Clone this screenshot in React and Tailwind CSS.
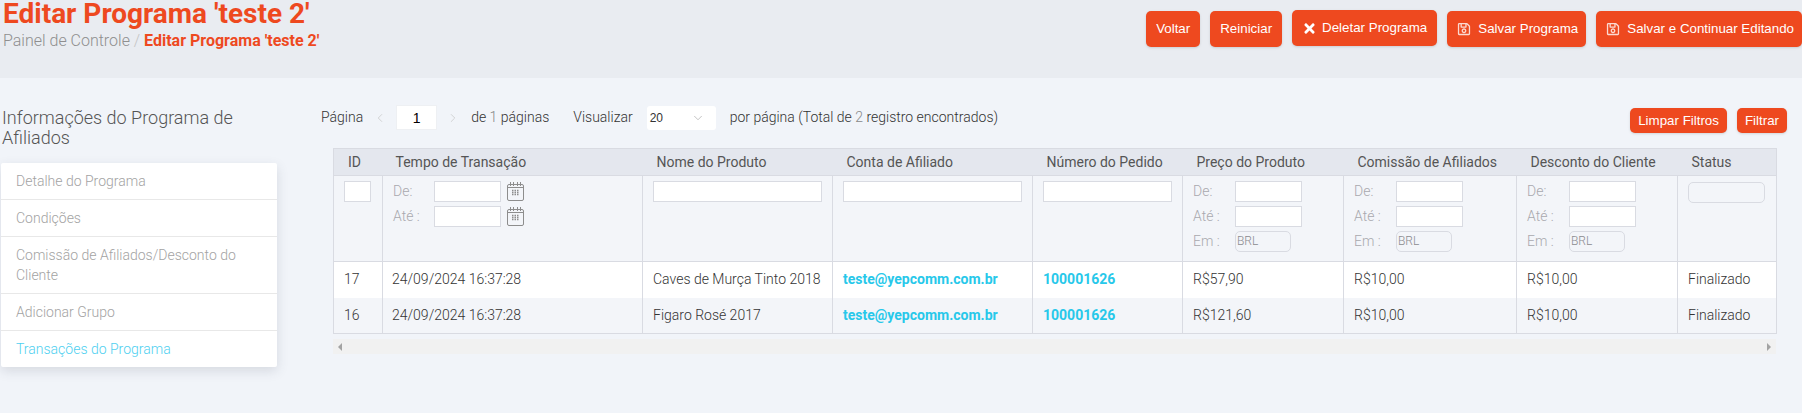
import { ChevronDown, ChevronLeft, ChevronRight } from 'lucide-react';
import { FaRegSave, FaTimes } from 'react-icons/fa';

const sideLinks = ['Detalhe do Programa', 'Condições', 'Comissão de Afiliados/Desconto do Cliente', 'Adicionar Grupo', 'Transações do Programa'];

const columns = [
  { label: 'ID', width: 49, pad: 'pl-[14px]' },
  { label: 'Tempo de Transação', width: 260, pad: 'pl-[13px]' },
  { label: 'Nome do Produto', width: 190, pad: 'pl-[14px]' },
  { label: 'Conta de Afiliado', width: 200, pad: 'pl-[14px]' },
  { label: 'Número do Pedido', width: 150, pad: 'pl-[14px]' },
  { label: 'Preço do Produto', width: 161, pad: 'pl-[14px]' },
  { label: 'Comissão de Afiliados', width: 173, pad: 'pl-[14px]' },
  { label: 'Desconto do Cliente', width: 161, pad: 'pl-[14px]' },
  { label: 'Status', width: 99, pad: 'pl-[14px]' },
];

const rows = [
  { id: 17, date: '24/09/2024 16:37:28', product: 'Caves de Murça Tinto 2018', price: 'R$57,90', bg: 'bg-white' },
  { id: 16, date: '24/09/2024 16:37:28', product: 'Figaro Rosé 2017', price: 'R$121,60', bg: 'bg-[#f3f5f9]' },
];

function Btn({ children, className = '' }) {
  return (
    <button className={`flex items-center rounded-[5px] bg-[#ee491f] text-white text-[13.33px] shadow-sm ${className}`} style={{ fontFamily: '"Liberation Sans", sans-serif' }}>
      {children}
    </button>
  );
}

function CalendarIcon() {
  return (
    <svg width="17" height="19" viewBox="0 0 17 19" fill="none" stroke="#8d8d8d" className="ml-[6px] shrink-0">
      <rect x="0.5" y="2.5" width="16" height="16" rx="1.5" />
      <path d="M0.5 5.5H16.5M3.5 0V4M6.5 0V4M10.5 0V4M13.5 0V4" />
      <path d="M5 8.5h7M5 10.5h7M5 12.5h7" strokeWidth="1.4" strokeDasharray="1.5 1" />
    </svg>
  );
}

function TextBox({ className = '' }) {
  return <div className={`h-[21px] bg-white border border-[#d9dbe2] ${className}`} />;
}

function RangeRow({ label, labelWidth = 'w-[42px]', children }) {
  return (
    <div className="flex items-center h-[21px] mb-[4px] text-[14px] text-[#a9a9ae] font-light">
      <span className={`${labelWidth} shrink-0`}>{label}</span>
      {children}
    </div>
  );
}

function MoneyFilter() {
  return (
    <div className="pl-[10px]">
      <RangeRow label="De:"><TextBox className="w-[67px]" /></RangeRow>
      <RangeRow label="Até :"><TextBox className="w-[67px]" /></RangeRow>
      <RangeRow label="Em :">
        <div className="w-[56px] h-[21px] border border-[#d9dbe2] rounded-[5px] pl-[1px] text-[12px] leading-[18px] text-[#8b8b8f]">BRL</div>
      </RangeRow>
    </div>
  );
}

export default function App() {
  return (
    <div className="min-h-screen bg-[#f1f4f9] text-[#444] overflow-hidden" style={{ fontFamily: 'Roboto, sans-serif' }}>
      <header className="h-[78px] bg-[#e9ecf1] flex justify-between">
        <div className="pl-[3px]">
          <h1 className="text-[28px] leading-[28px] font-bold text-[#ee491f]">Editar Programa 'teste 2'</h1>
          <p className="mt-[3px] text-[16px] leading-[20px] font-light text-[#8f8f8f]">
            Painel de Controle <span className="text-[#c4c4c4]">/</span> <span className="font-bold text-[#ee491f]">Editar Programa 'teste 2'</span>
          </p>
        </div>
        <div className="flex items-start gap-[10px] pt-[11px]">
          <Btn className="h-[36px] px-[10px]">Voltar</Btn>
          <Btn className="h-[36px] px-[10px]">Reiniciar</Btn>
          <Btn className="h-[36px] px-[10px] -mt-[1px]"><FaTimes className="mr-[5px] text-[15px]" />Deletar Programa</Btn>
          <Btn className="h-[36px] pl-[10px] pr-[8px]"><FaRegSave className="mr-[7px] text-[14px] opacity-80" />Salvar Programa</Btn>
          <Btn className="h-[36px] pl-[10px] pr-[8px]"><FaRegSave className="mr-[7px] text-[14px] opacity-80" />Salvar e Continuar Editando</Btn>
        </div>
      </header>

      <div className="flex pt-[27px]">
        <aside className="w-[276px] ml-[1px] pt-[3px] shrink-0">
          <h2 className="pl-[1px] text-[18px] leading-[20px] font-light text-[#555]">Informações do Programa de Afiliados</h2>
          <ul className="mt-[15px] bg-white rounded-[2px] shadow-[0_4px_12px_rgba(60,70,90,0.15)] text-[14px] leading-[20px] font-light text-[#a3a3a3]">
            {sideLinks.map((l, i) => (
              <li key={l} className={`px-[15px] py-[8px] ${i < 4 ? 'border-b border-[#e8e8e8]' : 'text-[#4fd0f0]'}`}>{l}</li>
            ))}
          </ul>
        </aside>

        <main className="ml-[44px] w-[1466px] shrink-0">
          <div className="flex items-start justify-between h-[25px] text-[14px] font-light text-[#333]">
            <div className="flex items-center h-[25px]">
              <span>Página</span>
              <ChevronLeft size={14} strokeWidth={1.25} className="ml-[10px] text-[#c6c6c6]" />
              <div className="ml-[9px] w-[41px] h-[25px] bg-white border border-[#eef0f3] text-center text-[14px] leading-[24px] text-black" style={{ fontFamily: '"Liberation Sans", sans-serif' }}>1</div>
              <ChevronRight size={14} strokeWidth={1.25} className="ml-[9px] text-[#c6c6c6]" />
              <span className="ml-[11px]">de <span className="text-[#888]">1</span> páginas</span>
              <span className="ml-[24px]">Visualizar</span>
              <div className="ml-[14px] flex items-center justify-between w-[69px] h-[24px] bg-white rounded-[3px] pl-[3px] pr-[11px] text-[12px]" style={{ fontFamily: '"Liberation Sans", sans-serif' }}>
                20 <ChevronDown size={14} strokeWidth={1} className="text-[#999]" />
              </div>
              <span className="ml-[14px]">por página (Total de <span className="text-[#888]">2</span> registro encontrados)</span>
            </div>
            <div className="flex gap-[10px] mt-[3px]">
              <Btn className="h-[25px] px-[8px]">Limpar Filtros</Btn>
              <Btn className="h-[25px] px-[8px]">Filtrar</Btn>
            </div>
          </div>

          <div className="mt-[18px] ml-[12px] w-[1443px]">
            <table className="w-full table-fixed border-collapse border border-[#d9dbe2] text-[14px]">
              <colgroup>
                {columns.map((c) => <col key={c.label} style={{ width: c.width }} />)}
              </colgroup>
              <thead>
                <tr className="h-[27px] bg-[#e4e7ee] text-[#555]">
                  {columns.map((c) => (
                    <th key={c.label} className={`${c.pad} text-left font-normal border-b border-[#d9dbe2]`}>{c.label}</th>
                  ))}
                </tr>
                <tr className="h-[86px] bg-[#f3f5f9] align-top">
                  <td className="border border-[#d9dbe2] pt-[5px] pl-[10px]"><TextBox className="w-[27px]" /></td>
                  <td className="border border-[#d9dbe2] pt-[5px] pl-[10px]">
                    <RangeRow label="De:" labelWidth="w-[41px]"><TextBox className="w-[67px]" /><CalendarIcon /></RangeRow>
                    <RangeRow label="Até :" labelWidth="w-[41px]"><TextBox className="w-[67px]" /><CalendarIcon /></RangeRow>
                  </td>
                  <td className="border border-[#d9dbe2] pt-[5px] pl-[10px]"><TextBox className="w-[169px]" /></td>
                  <td className="border border-[#d9dbe2] pt-[5px] pl-[10px]"><TextBox className="w-[179px]" /></td>
                  <td className="border border-[#d9dbe2] pt-[5px] pl-[10px]"><TextBox className="w-[129px]" /></td>
                  <td className="border border-[#d9dbe2] pt-[5px]"><MoneyFilter /></td>
                  <td className="border border-[#d9dbe2] pt-[5px]"><MoneyFilter /></td>
                  <td className="border border-[#d9dbe2] pt-[5px]"><MoneyFilter /></td>
                  <td className="border border-[#d9dbe2] pt-[6px] pl-[10px]">
                    <div className="w-[77px] h-[21px] border border-[#d9dbe2] rounded-[5px]" />
                  </td>
                </tr>
              </thead>
              <tbody>
                {rows.map((r) => (
                  <tr key={r.id} className={`h-[36px] ${r.bg} text-[#333] text-[14px] font-light`}>
                    <td className="border-x border-[#d9dbe2] pl-[10px]">{r.id}</td>
                    <td className="border-x border-[#d9dbe2] pl-[9px]">{r.date}</td>
                    <td className="border-x border-[#d9dbe2] pl-[10px]">{r.product}</td>
                    <td className="border-x border-[#d9dbe2] pl-[10px] font-bold text-[#27c8ea]">teste@yepcomm.com.br</td>
                    <td className="border-x border-[#d9dbe2] pl-[10px] font-bold text-[#27c8ea]">100001626</td>
                    <td className="border-x border-[#d9dbe2] pl-[10px]">{r.price}</td>
                    <td className="border-x border-[#d9dbe2] pl-[10px]">R$10,00</td>
                    <td className="border-x border-[#d9dbe2] pl-[10px]">R$10,00</td>
                    <td className="border-x border-[#d9dbe2] pl-[10px]">Finalizado</td>
                  </tr>
                ))}
              </tbody>
            </table>
            <div className="mt-[5px] h-[15px] bg-[#f1f1f1] flex items-center justify-between px-[5px] text-[#a3a3a3]">
              <span className="border-y-[4px] border-r-[4px] border-y-transparent border-r-[#a3a3a3]" />
              <span className="border-y-[4px] border-l-[4px] border-y-transparent border-l-[#a3a3a3]" />
            </div>
          </div>
        </main>
      </div>
    </div>
  );
}
